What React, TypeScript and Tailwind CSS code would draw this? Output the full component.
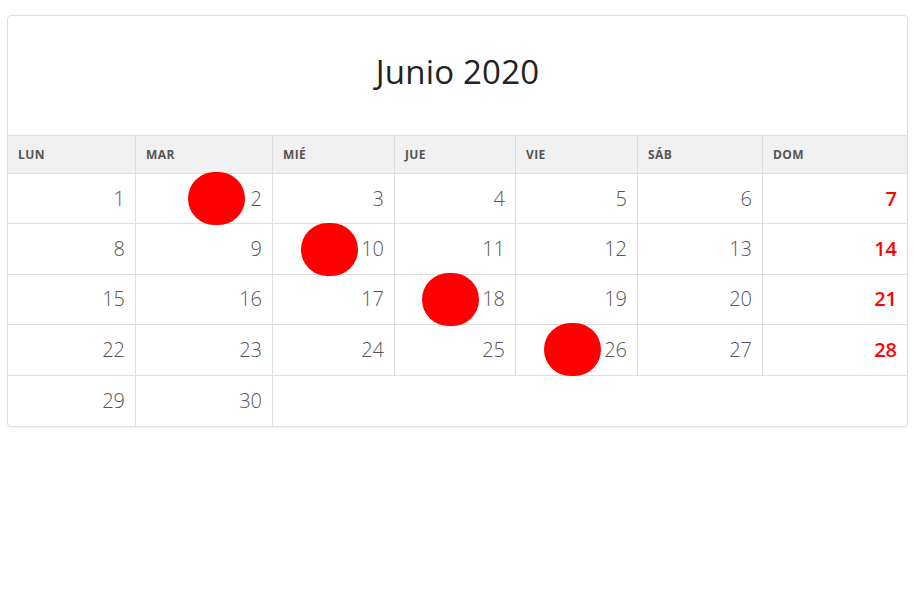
import React from 'react';

const days = ['LUN', 'MAR', 'MIÉ', 'JUE', 'VIE', 'SÁB', 'DOM'];

// June 2020 starts on Monday
const weeks = [
  [1, 2, 3, 4, 5, 6, 7],
  [8, 9, 10, 11, 12, 13, 14],
  [15, 16, 17, 18, 19, 20, 21],
  [22, 23, 24, 25, 26, 27, 28],
  [29, 30],
];

const marked = [2, 10, 18, 26];

const cols = 'grid grid-cols-[128px_137px_122px_121px_122px_125px_144px]';

const DayCell = ({ n, col }: { n: number; col: number }) => {
  const sunday = col === 6;
  const isMarked = marked.includes(n);
  return (
    <div
      className={`h-[50.4px] flex items-center justify-end pr-[10px] border-b border-[#dedede] ${
        sunday ? '' : 'border-r'
      }`}
    >
      {isMarked && (
        <span
          className={`w-[57px] h-[53px] -my-[2px] rounded-full bg-[#ff0000] shrink-0 ${n < 10 ? 'mr-[6px]' : 'mr-[3px]'}`}
        />
      )}
      <span
        className={`text-[20px] leading-none ${
          sunday ? 'text-[#ff0000] font-semibold' : 'text-[#555] font-light'
        }`}
      >
        {n}
      </span>
    </div>
  );
};

export default function App() {
  return (
    <div className="w-[914px] h-[606px] bg-white pt-[15px] pl-[7px]" style={{ fontFamily: '"Open Sans", "Liberation Sans", sans-serif' }}>
      <div className="w-[901px] border border-[#dedede] rounded-[4px] overflow-hidden shadow-[0_1px_2px_rgba(0,0,0,0.06)]">
        <div className="h-[120px] flex items-center justify-center pb-[7px] border-b border-[#dedede]">
          <h1 className="text-[33px] text-[#222] font-normal tracking-[0.2px]">Junio 2020</h1>
        </div>

        <div className={`${cols} bg-[#f1f1f1] border-b border-[#dedede]`}>
          {days.map((d, i) => (
            <div
              key={d}
              className={`h-[37px] flex items-center pl-[10px] text-[12px] tracking-[0.4px] font-bold text-[#555] ${
                i < 6 ? 'border-r border-[#dedede]' : ''
              }`}
            >
              {d}
            </div>
          ))}
        </div>

        {weeks.slice(0, 4).map((w, wi) => (
          <div key={wi} className={cols}>
            {w.map((n, i) => (
              <DayCell key={n} n={n} col={i} />
            ))}
          </div>
        ))}

        <div className={cols}>
          {weeks[4].map((n) => (
            <div key={n} className="h-[50px] flex items-center justify-end pr-[10px] border-r border-[#dedede]">
              <span className="text-[20px] leading-none text-[#555] font-light">{n}</span>
            </div>
          ))}
          <div className="col-span-5 h-[50px]" />
        </div>
      </div>
    </div>
  );
}
